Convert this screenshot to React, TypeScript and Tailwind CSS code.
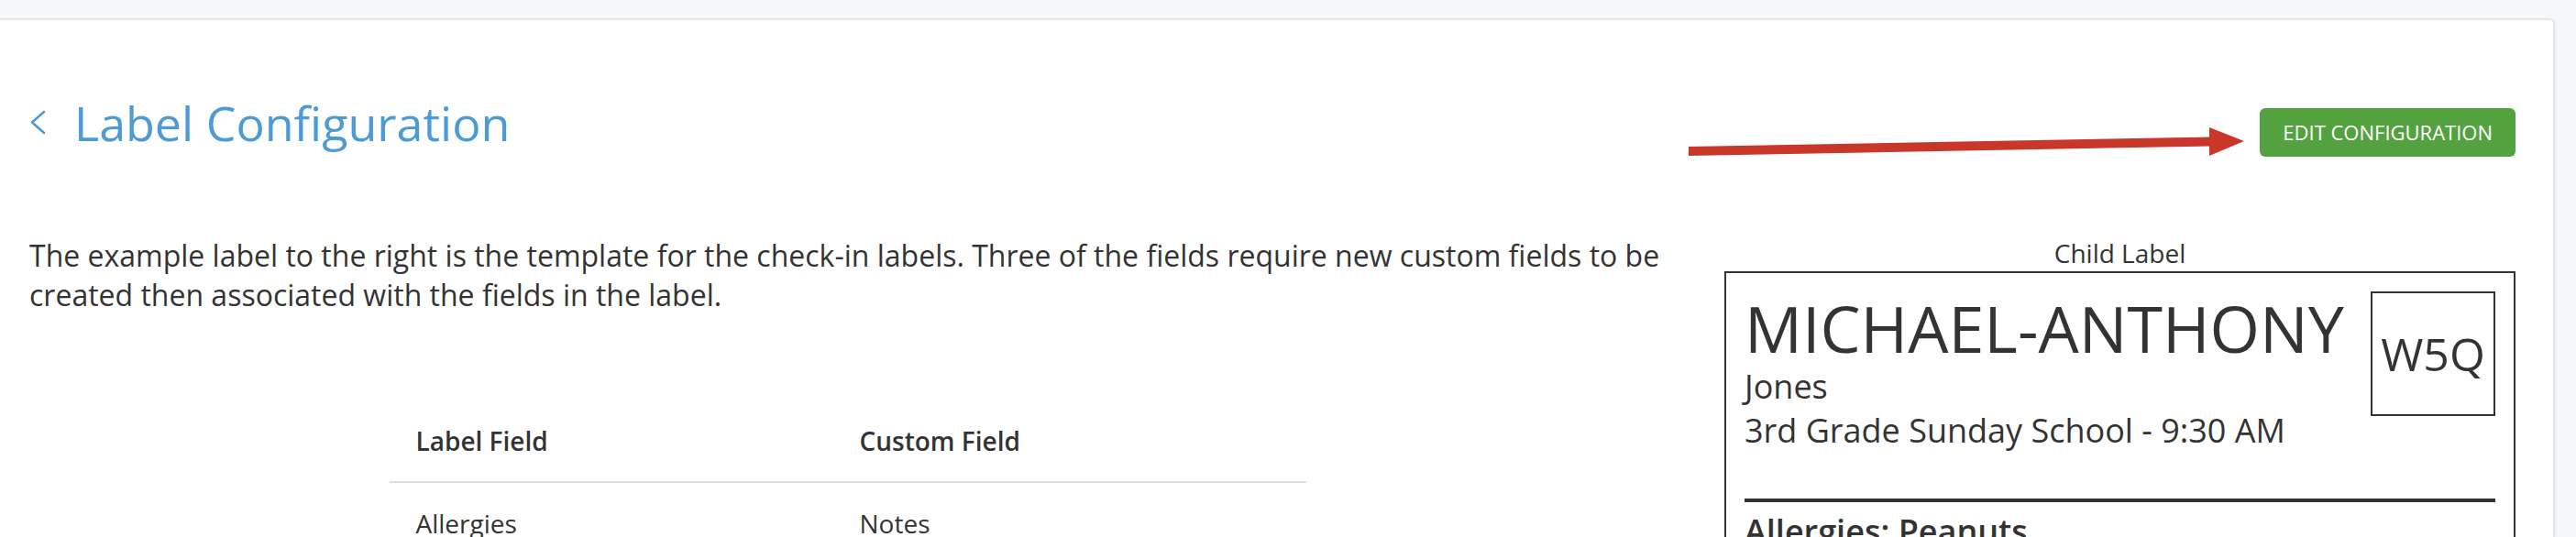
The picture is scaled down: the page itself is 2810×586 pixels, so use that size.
import React from "react";

const rows = [{ field: "Allergies", custom: "Notes" }];

function BackChevron() {
  return (
    <svg width="18" height="28" viewBox="0 0 18 28" fill="none">
      <path d="M16 2 L3 13.5 L16 25" stroke="#4d9bd4" strokeWidth="2.6" strokeLinecap="round" strokeLinejoin="round" />
    </svg>
  );
}

function PointerArrow() {
  return (
    <svg className="absolute left-[1836px] top-[110px]" width="620" height="50" viewBox="0 0 620 50">
      <polygon points="6,28 576,17.5 576,27.5 6,38" fill="#c8372a" />
      <polygon points="574,7 612,22 574,38" fill="#c8372a" />
    </svg>
  );
}

function ChildLabel() {
  return (
    <div className="w-[863px] shrink-0">
      <div className="text-center text-[28px] leading-[39px] text-[#333]">Child Label</div>
      <div className="border-2 border-[#333] p-[20px] text-[#333]">
        <div className="flex justify-between">
          <div>
            <div className="text-[70px] leading-[80px]">MICHAEL-ANTHONY</div>
            <div className="text-[36px] leading-[48px]">Jones</div>
            <div className="text-[36px] leading-[48px]">3rd Grade Sunday School - 9:30 AM</div>
          </div>
          <div className="w-[136px] h-[136px] border-2 border-[#333] flex items-center justify-center text-[50px]">
            W5Q
          </div>
        </div>
        <div className="mt-[50px] h-[4px] bg-[#333]" />
        <div className="mt-[8px] text-[36px] leading-[48px] font-semibold">Allergies: Peanuts</div>
      </div>
    </div>
  );
}

export default function App() {
  return (
    <div className="min-h-[586px] bg-[#f6f7f9] pt-[20px] overflow-hidden" style={{ fontFamily: '"Open Sans", sans-serif' }}>
      <div className="relative w-[2787px] h-[566px] overflow-hidden bg-white border-t-2 border-r-2 border-[#e4e6ea] rounded-tr-[6px] shadow-sm pl-[32px] pr-[41px] pt-[81px]">
        <PointerArrow />

        <div className="flex justify-between items-start">
          <div className="flex items-center gap-[31px]">
            <BackChevron />
            <h1 className="text-[52px] leading-[62px] text-[#4d9bd4]">Label Configuration</h1>
          </div>
          <button className="mt-[15px] h-[53px] px-[25px] rounded-[6px] bg-[#54a23f] text-white text-[22px] uppercase">
            Edit Configuration
          </button>
        </div>

        <div className="mt-[86px] flex gap-[64px]">
          <div className="flex-1">
            <p className="text-[32px] leading-[43px] text-[#333]">
              The example label to the right is the template for the check-in labels. Three of the fields require new custom fields to be created then associated with the fields in the label.
            </p>

            <div className="mt-[94px] mx-auto w-[1000px] text-[28px] leading-[42px] text-[#333]">
              <div className="flex border-b-2 border-[#dedede] font-semibold">
                <div className="w-[484px] py-[23px] pl-[29px]">Label Field</div>
                <div className="flex-1 py-[23px] pl-[29px]">Custom Field</div>
              </div>
              {rows.map((r) => (
                <div key={r.field} className="flex">
                  <div className="w-[484px] py-[23px] pl-[29px]">{r.field}</div>
                  <div className="flex-1 py-[23px] pl-[29px]">{r.custom}</div>
                </div>
              ))}
            </div>
          </div>

          <ChildLabel />
        </div>
      </div>
    </div>
  );
}
